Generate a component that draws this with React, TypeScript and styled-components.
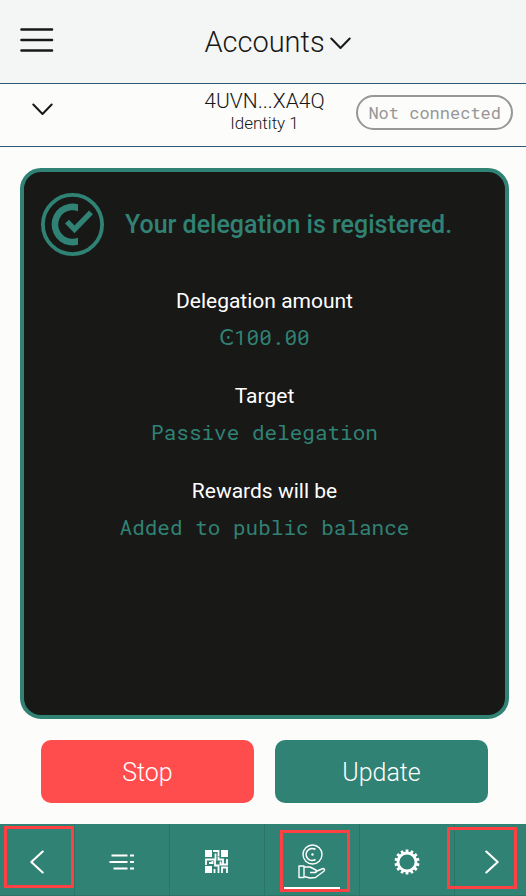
import React from 'react';
import styled, { createGlobalStyle, css } from 'styled-components';

const green = '#308274';
const ink = '#181817';
const paper = '#fcfcfa';

const GlobalStyle = createGlobalStyle`
  *, *::before, *::after { box-sizing: border-box; }
  html, body, #root { height: 100%; }
  body {
    margin: 0;
    background: ${paper};
    color: ${ink};
    font-family: Roboto, "Liberation Sans", sans-serif;
    font-weight: 300;
  }
  button { font: inherit; color: inherit; cursor: pointer; }
`;

const mono = css`
  font-family: "Roboto Mono", "Liberation Mono", monospace;
`;

const Page = styled.div`
  display: flex;
  flex-direction: column;
  min-height: 100%;
`;

const Bar = styled.header`
  display: grid;
  grid-template-columns: 1fr auto 1fr;
  align-items: center;
  height: 84px;
  padding: 0 17px 0 20px;
  background: #f4f6f5;
  border-bottom: 1px solid #305a75;
`;

const PlainButton = styled.button`
  display: flex;
  align-items: center;
  padding: 0;
  border: 0;
  background: none;
  justify-self: start;
`;

const MenuButton = styled(PlainButton)`
  padding-bottom: 3px;
`;

const TitleButton = styled(PlainButton)`
  gap: 5px;
  padding-left: 26px;
  font-size: 29px;
  line-height: 36px;
  svg { margin-top: 4px; }
`;

const Title = styled.h1`
  margin: 0;
  font: inherit;
`;

const AccountRow = styled.section`
  display: grid;
  grid-template-columns: 1fr auto 1fr;
  align-items: start;
  height: 63px;
  padding: 5px 13px 0 16px;
  border-bottom: 1px solid #305a75;
`;

const Toggle = styled(PlainButton)`
  padding: 14px 16px;
`;

const AccountName = styled.div`
  text-align: center;
  font-size: 21px;
  line-height: 24px;
`;

const Identity = styled.div`
  text-align: center;
  font-size: 17px;
  line-height: 20px;
`;

const Status = styled.span`
  ${mono}
  justify-self: end;
  margin-top: 6px;
  padding: 0 10px;
  border: 2px solid #979797;
  border-radius: 18px;
  color: #979797;
  font-size: 17px;
  font-weight: 400;
  line-height: 31px;
  white-space: nowrap;
`;

const Main = styled.main`
  display: flex;
  flex: 1;
  flex-direction: column;
  gap: 21px;
  padding: 21px 17px 21px 20px;
`;

const Card = styled.section`
  flex: 1;
  padding: 21px 17px;
  border: 4px solid ${green};
  border-radius: 21px;
  background: ${ink};
`;

const CardHead = styled.div`
  display: flex;
  align-items: center;
  gap: 21px;
`;

const CardTitle = styled.h2`
  margin: 0;
  color: ${green};
  font-size: 25px;
  font-weight: 500;
  line-height: 32px;
`;

const Details = styled.dl`
  display: grid;
  gap: 23px;
  margin: 26px 0 0;
  text-align: center;
`;

const Term = styled.dt`
  color: #fff;
  font-size: 21px;
  font-weight: 400;
  line-height: 38px;
`;

const Value = styled.dd`
  ${mono}
  margin: 0;
  color: ${green};
  font-size: 21px;
  font-weight: 400;
  line-height: 34px;
`;

const Currency = styled.span`
  font-family: "DejaVu Sans", sans-serif;
  line-height: 1;
`;

const Actions = styled.div`
  display: grid;
  grid-template-columns: 1fr 1fr;
  gap: 21px;
  padding: 0 21px;
`;

const ActionButton = styled.button<{ $danger?: boolean }>`
  height: 63px;
  padding: 2px 0 0;
  border: 0;
  border-radius: 10px;
  background: ${(p) => (p.$danger ? '#ff4d4e' : green)};
  && { color: #fff; font-size: 25px; }
`;

const Nav = styled.nav`
  display: grid;
  grid-template-columns: 75px repeat(4, 1fr) 71px;
  height: 72px;
  background: ${green};
  border-bottom: 1px solid #2b7568;
  color: #fff;
`;

const NavButton = styled.button<{ $active?: boolean }>`
  position: relative;
  display: flex;
  align-items: center;
  justify-content: center;
  padding: 5px 0 0;
  border: 0;
  border-right: 1px solid #2b7568;
  background: none;
  &:last-child { border-right: 0; padding-left: 3px; }
  ${(p) => p.$active && css`
    &::after {
      content: '';
      position: absolute;
      left: 50%;
      bottom: 6px;
      width: 56px;
      height: 2px;
      margin-left: -28px;
      background: #fff;
    }
  `}
`;

const Marker = styled.span<{ $left: number; $top: number }>`
  position: absolute;
  z-index: 1;
  left: ${(p) => p.$left}px;
  top: ${(p) => p.$top}px;
  width: 70px;
  height: 62px;
  border: 3px solid #ff4144;
  pointer-events: none;
`;

const MenuIcon = () => (
  <svg width="34" height="26" viewBox="0 0 34 26" stroke={ink} strokeWidth="2.6" strokeLinecap="round" aria-hidden="true">
    <path d="M1.5 2.5H32M1.5 13H32M1.5 23.5H32" />
  </svg>
);

const Chevron = () => (
  <svg width="21" height="13" viewBox="0 0 21 13" fill="none" stroke={ink} strokeWidth="2" strokeLinecap="round" strokeLinejoin="round" aria-hidden="true">
    <path d="M1.3 1.5L10.5 11L19.7 1.5" />
  </svg>
);

const Arrow = ({ right = false }: { right?: boolean }) => (
  <svg width="14" height="24" viewBox="0 0 14 24" fill="none" stroke="#fff" strokeWidth="2.1" strokeLinecap="round" strokeLinejoin="round" aria-hidden="true">
    <path d={right ? 'M1.3 1.5L12.7 12L1.3 22.5' : 'M12.7 1.5L1.3 12L12.7 22.5'} />
  </svg>
);

const RegisteredIcon = () => (
  <svg width="63" height="63" viewBox="0 0 63 63" aria-hidden="true">
    <circle cx="31.5" cy="31.5" r="29.6" fill="none" stroke={green} strokeWidth="3.8" />
    <path fill={green} d="M37 11.2A21 21 0 1 0 37 51.8V44.7A14.3 14.3 0 1 1 37 18.3Z" />
    <path d="M26 28.6L33.5 36.4L50 19.4" fill="none" stroke={green} strokeWidth="5.4" />
  </svg>
);

const ListIcon = () => (
  <svg width="26" height="18" viewBox="0 0 26 18" stroke="#fff" strokeWidth="2.2" aria-hidden="true">
    <path d="M2.5 2.5H18.5M21 2.5H25M0.5 9H18.5M21 9H25M4.5 15.5H18.5M21 15.5H25" />
  </svg>
);

const CodeIcon = () => (
  <svg width="24" height="24" viewBox="0 0 24 24" aria-hidden="true">
    <path fill="#fff" d="M0 0H7V7H0ZM16 0H23V7H16ZM0 16H7V23H0Z" />
    <path fill="none" stroke="#fff" strokeWidth="1.8" d="M8 1H13.5V6.5M10.5 3.5V9.5H1V15M4 13H7.5V11M10 10.5V15.5H13.5V23M9.5 19V23M13.5 7V9.5H18V13.5M22 9V14.5H15.5V11.5M17 23V17.5H22V23" />
  </svg>
);

const EarnIcon = () => (
  <svg width="28" height="36" viewBox="0 0 28 36" fill="none" stroke="#fff" strokeWidth="1.4" strokeLinejoin="round" aria-hidden="true">
    <circle cx="14.5" cy="10.5" r="9.5" />
    <path d="M17.5 5.5A6 6 0 1 0 17.5 15.5" strokeWidth="1.7" />
    <circle cx="14.5" cy="10.5" r="1.2" fill="#fff" stroke="none" />
    <path d="M1 22H6V33.5H1ZM6 23H12L18 26V28.5H12M18 27.5L25 24.5C27 24.5 27 26.5 25.5 27.5L17.5 33.5L12 34L6 32.5" />
  </svg>
);

const teeth = Array.from({ length: 14 }, (_, i) => (i * 360) / 14);

const GearIcon = () => (
  <svg width="26" height="26" viewBox="0 0 26 26" fill="none" stroke="#fff" aria-hidden="true">
    <circle cx="13" cy="13" r="9" strokeWidth="2.8" />
    {teeth.map((angle) => (
      <path key={angle} d="M13 0.5V4" strokeWidth="2.8" transform={`rotate(${angle} 13 13)`} />
    ))}
  </svg>
);

const details = [
  { term: 'Delegation amount', currency: 'Ͼ', value: '100.00' },
  { term: 'Target', value: 'Passive delegation' },
  { term: 'Rewards will be', value: 'Added to public balance' },
];

export default function App() {
  return (
    <Page>
      <GlobalStyle />
      <Bar>
        <MenuButton aria-label="Menu"><MenuIcon /></MenuButton>
        <TitleButton><Title>Accounts</Title><Chevron /></TitleButton>
      </Bar>
      <AccountRow>
        <Toggle aria-label="Show accounts"><Chevron /></Toggle>
        <div>
          <AccountName>4UVN...XA4Q</AccountName>
          <Identity>Identity 1</Identity>
        </div>
        <Status>Not connected</Status>
      </AccountRow>
      <Main>
        <Card>
          <CardHead>
            <RegisteredIcon />
            <CardTitle>Your delegation is registered.</CardTitle>
          </CardHead>
          <Details>
            {details.map(({ term, currency, value }) => (
              <div key={term}>
                <Term>{term}</Term>
                <Value>{currency && <Currency>{currency}</Currency>}{value}</Value>
              </div>
            ))}
          </Details>
        </Card>
        <Actions>
          <ActionButton $danger>Stop</ActionButton>
          <ActionButton>Update</ActionButton>
        </Actions>
      </Main>
      <Nav aria-label="Account actions">
        <NavButton aria-label="Previous"><Arrow /><Marker $left={4} $top={2} /></NavButton>
        <NavButton aria-label="Transactions"><ListIcon /></NavButton>
        <NavButton aria-label="Address"><CodeIcon /></NavButton>
        <NavButton aria-label="Earn" $active><EarnIcon /><Marker $left={15} $top={6} /></NavButton>
        <NavButton aria-label="Settings"><GearIcon /></NavButton>
        <NavButton aria-label="Next"><Arrow right /><Marker $left={-8} $top={3} /></NavButton>
      </Nav>
    </Page>
  );
}
